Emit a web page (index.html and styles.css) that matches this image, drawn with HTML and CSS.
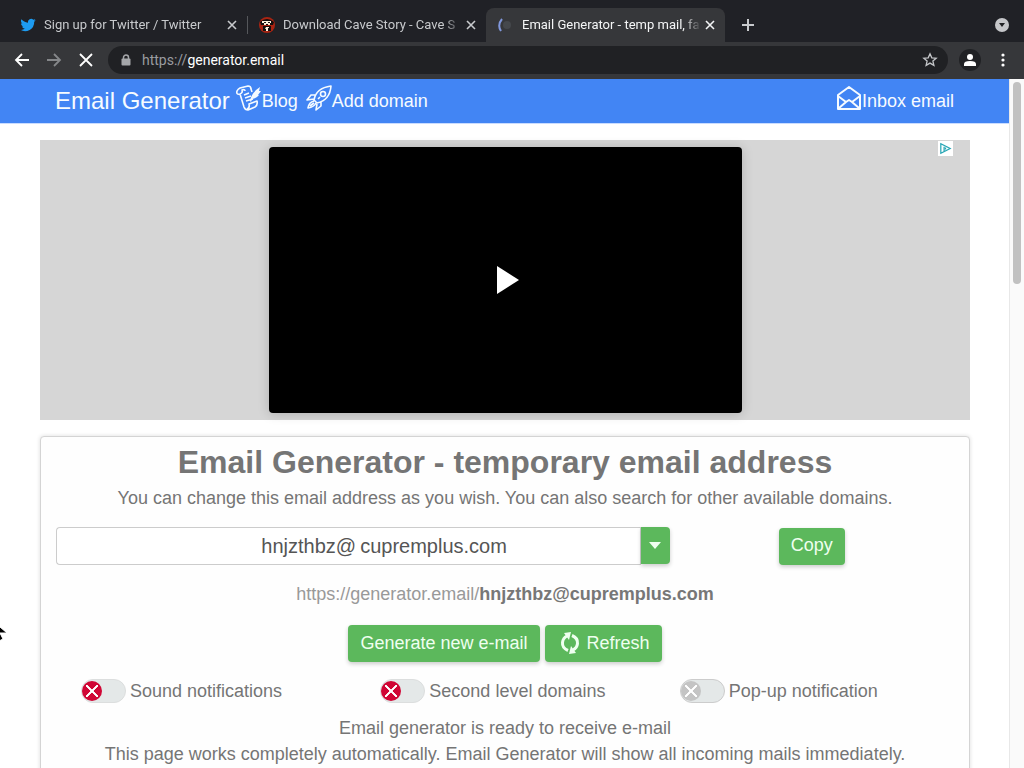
FILE: index.html
```html
<!DOCTYPE html>
<html lang="en">
<head>
<meta charset="utf-8">
<meta name="viewport" content="width=device-width, initial-scale=1">
<title>Email Generator - temp mail</title>
<link rel="stylesheet" href="styles.css">
</head>
<body>
<div class="browser">
  <div class="tab-strip">
    <div class="tab">
      <svg class="favicon" viewBox="0 0 24 24" aria-hidden="true"><path fill="#1d9bf0" d="M23.6 4.9c-.8.4-1.700.6-2.700.8 1-.6 1.700-1.500 2.100-2.600-.9.500-1.900.9-3 1.100A4.800 4.800 0 0 0 11.900 8.500C8 8.300 4.500 6.400 2.100 3.500c-1.300 2.200-.7 5 1.500 6.400-.8 0-1.500-.2-2.200-.6 0 2.300 1.600 4.300 3.800 4.700-.7.2-1.400.2-2.100.1.6 1.900 2.400 3.300 4.400 3.300A9.600 9.600 0 0 1 .5 19.300 13.600 13.600 0 0 0 21.300 7.300c.9-.7 1.700-1.500 2.300-2.400z"/></svg>
      <span class="tab-title">Sign up for Twitter / Twitter</span>
      <button class="tab-close" aria-label="Close tab"><svg viewBox="0 0 10 10"><path d="M1 1l8 8M9 1L1 9"/></svg></button>
    </div>
    <div class="tab tab-divided">
      <svg class="favicon" viewBox="0 0 16 16" aria-hidden="true"><circle cx="8" cy="8" r="8" fill="#a92412"/><path fill="#141010" d="M1 5Q8-1 15 5l-1 3H2zM4 9h8v5H4z"/><path fill="#fff3dc" d="M3 4h9v2h-1v2H9V7H7v1H5V6H3zM7 10h3v1H9v3H7v-2H6z"/><path fill="#1c1414" d="M5 5h2v1H5zm4 0h2v1H9z"/></svg>
      <span class="tab-title">Download Cave Story - Cave S</span>
      <button class="tab-close" aria-label="Close tab"><svg viewBox="0 0 10 10"><path d="M1 1l8 8M9 1L1 9"/></svg></button>
    </div>
    <div class="tab tab-active">
      <svg class="favicon" viewBox="0 0 16 16" aria-hidden="true"><circle cx="9" cy="8" r="4" fill="#45484c"/><path d="M4 2Q-1 8 3 14" fill="none" stroke="#8198dc" stroke-width="2"/></svg>
      <span class="tab-title">Email Generator - temp mail, fa</span>
      <button class="tab-close" aria-label="Close tab"><svg viewBox="0 0 10 10"><path d="M1 1l8 8M9 1L1 9"/></svg></button>
    </div>
    <button class="new-tab" aria-label="New tab"><svg viewBox="0 0 12 12"><path d="M6 0v12M0 6h12"/></svg></button>
    <button class="tab-search" aria-label="Search tabs"><svg viewBox="0 0 14 14"><circle cx="7" cy="7" r="7" fill="#c6c7ca"/><path fill="#202124" d="M4 5h6L7 9z"/></svg></button>
  </div>

  <div class="toolbar">
    <button class="tool" aria-label="Back"><svg viewBox="0 0 16 16"><path d="M15 8H2M8 2L2 8l6 6"/></svg></button>
    <button class="tool tool-dim" aria-label="Forward"><svg viewBox="0 0 16 16"><path d="M1 8h13M8 2l6 6-6 6"/></svg></button>
    <button class="tool" aria-label="Stop loading"><svg viewBox="0 0 16 16"><path d="M2 2l12 12M14 2L2 14"/></svg></button>
    <div class="address">
      <svg class="lock" viewBox="0 0 10 12" aria-hidden="true"><path fill="none" stroke="#a5a7aa" stroke-width="1.500" d="M2.500 5V3.500a2.500 2.500 0 0 1 5 0V5"/><rect y="4.500" x=".5" width="9" height="7" rx="1" fill="#a5a7aa"/></svg>
      <span class="url"><span class="scheme">https://</span>generator.email</span>
      <button class="star" aria-label="Bookmark this page"><svg viewBox="0 0 16 16"><path fill="none" stroke="#c4c6c9" stroke-width="1.300" d="M8 1.800l1.800 4 4.400.4-3.300 2.900 1 4.300L8 11.100l-3.900 2.300 1-4.300-3.300-2.900 4.400-.4z"/></svg></button>
    </div>
    <button class="profile" aria-label="Profile"><svg viewBox="0 0 12 12"><circle cx="6" cy="3" r="3"/><path d="M0 12v-2q0-3 6-3t6 3v2z"/></svg></button>
    <button class="menu" aria-label="Menu"><svg viewBox="0 0 4 14"><circle cx="2" cy="2" r="1.600"/><circle cx="2" cy="7" r="1.600"/><circle cx="2" cy="12" r="1.600"/></svg></button>
  </div>

  <div class="viewport">
    <div class="page">
      <header class="site-header">
        <nav class="nav">
          <a class="brand" href="#">Email Generator</a>
          <a class="nav-link nav-blog" href="#blog"><svg class="nav-icon" viewBox="0 0 26 26" aria-hidden="true"><path d="M4 9Q0 10 1 6 2 4 4 3l8-2q3 0 3 3l1 3M4 9q3-1 2-4 3-1 3 1M4 9l4 13q1 3 4 3l7-3q3-2 2-6l-8 3q1 4-2 5"/><path stroke-width="1.400" d="M8 10l5-2M9 13l6-2M10 16l7-2"/><path fill="currentColor" stroke="none" d="M14 16q1-8 10-14l-1 4h2l-3 4h1q-3 4-7 4l-1 3z"/></svg>Blog</a>
          <a class="nav-link" href="#domain"><svg class="nav-icon" viewBox="0 0 26 26" aria-hidden="true"><path d="M8 15Q10 3 25 1q-1 14-14 17zM9 10H5l-4 5 7-1M15 17v4l-5 4 1-6M8 16q-5 1-6 7 6-1 8-5M4 21l4-3"/><circle cx="17" cy="9" r="2.500"/><path d="M12 14l2-2"/></svg>Add domain</a>
          <a class="nav-link nav-inbox" href="#inbox"><svg class="nav-icon" viewBox="0 0 26 26" aria-hidden="true"><path stroke-width="2" d="M2 10l11-8 11 8v14H2zM2 11l8 6M24 11l-8 6M3 23l7-6 3-2 3 2 7 6"/></svg>Inbox email</a>
        </nav>
      </header>

      <main class="content">
        <section class="ad" aria-label="Advertisement">
          <button class="video" aria-label="Play video"><svg viewBox="0 0 22 28"><path fill="#fff" d="M0 0l22 14L0 28z"/></svg></button>
          <a class="ad-choices" href="#ads" aria-label="AdChoices"><svg viewBox="0 0 16 16"><path fill="none" stroke="#27a6b5" stroke-width="1.300" d="M3 3v10l10-5zM6.500 6v5M8 7v2"/></svg></a>
        </section>

        <section class="card">
          <h1 class="title">Email Generator - temporary email address</h1>
          <p class="text">You can change this email address as you wish. You can also search for other available domains.</p>
          <div class="address-row">
            <div class="email-group">
              <input class="email-user" aria-label="User name" value="hnjzthbz@">
              <input class="email-domain" aria-label="Domain" value="cupremplus.com">
              <button class="drop" aria-label="Choose domain"><svg viewBox="0 0 12 7"><path fill="#effff0" d="M0 0h12L6 7z"/></svg></button>
            </div>
            <button class="btn">Copy</button>
          </div>
          <p class="text direct"><a href="#mail">https://generator.email/<b>hnjzthbz@cupremplus.com</b></a></p>
          <div class="actions">
            <button class="btn">Generate new e-mail</button>
            <button class="btn btn-refresh"><svg viewBox="0 0 20 22" aria-hidden="true"><path fill="none" stroke="#effff0" stroke-width="3" d="M8 18.500Q2 16 2.500 10.500 3 6 7 4M12 3.500Q18 6 17.500 11.500 17 16 13 18"/><path fill="#effff0" d="M4 1l7-1-2 8zM16 21l-7 1 2-8z"/></svg>Refresh</button>
          </div>
          <div class="options">
            <label class="option"><input class="switch" type="checkbox" role="switch">Sound notifications</label>
            <label class="option"><input class="switch" type="checkbox" role="switch">Second level domains</label>
            <label class="option"><input class="switch" type="checkbox" role="switch" disabled>Pop-up notification</label>
          </div>
          <p class="text">Email generator is ready to receive e-mail</p>
          <p class="text">This page works completely automatically. Email Generator will show all incoming mails immediately.</p>
        </section>
      </main>
    </div>
    <div class="scrollbar" aria-hidden="true"><div class="thumb"></div></div>
  </div>
</div>
<svg class="cursor" viewBox="0 0 18 26" aria-hidden="true"><path fill="#000" stroke="#fff" stroke-width="1" d="M1 1v18l4-4 3 7 4-2-3-6h7z"/></svg>
</body>
</html>
```
FILE: styles.css
```css
* { box-sizing: border-box; }

body {
  margin: 0;
  overflow: hidden;
  background: #fff;
  font-family: "Liberation Sans", Arial, sans-serif;
}

button {
  padding: 0;
  border: 0;
  background: none;
  color: inherit;
  font: inherit;
}

a { color: inherit; text-decoration: none; }
svg { display: block; flex: none; }

.browser {
  display: flex;
  flex-direction: column;
  height: 100vh;
}

/* Tab strip */
.tab-strip {
  display: flex;
  flex: none;
  align-items: flex-end;
  height: 42px;
  padding: 0 15px 0 8px;
  background: #202126;
  color: #c8cacd;
  font: 13px/16px Roboto, sans-serif;
}

.tab {
  display: flex;
  flex: 0 1 239px;
  align-items: center;
  min-width: 0;
  height: 34px;
  padding: 0 10px 0 12px;
}

.tab-divided {
  background: linear-gradient(#55575b, #55575b) 0 8px / 1px 18px no-repeat;
}

.tab-active {
  border-radius: 8px 8px 0 0;
  background: #36373a;
  color: #f4f5f6;
}

.favicon { width: 16px; height: 16px; margin-right: 8px; }

.tab-title {
  flex: 1;
  overflow: hidden;
  white-space: nowrap;
  -webkit-mask-image: linear-gradient(90deg, #000 90%, transparent);
  mask-image: linear-gradient(90deg, #000 90%, transparent);
}

.tab-close { margin-left: 4px; }
.tab-close svg { width: 10px; height: 10px; }
.tab-close path,
.new-tab path { stroke: currentColor; stroke-width: 2; }
.tab-close path { stroke-width: 1.600; }
.new-tab { margin: 0 0 11px 17px; }
.new-tab svg { width: 12px; height: 12px; }
.tab-search { margin: 0 0 10px auto; }
.tab-search svg { width: 14px; height: 14px; }

/* Toolbar */
.toolbar {
  display: flex;
  flex: none;
  align-items: center;
  height: 37px;
  padding: 0 19px 2px 14px;
  background: #36373a;
  color: #fff;
}

.tool { margin-right: 16px; }
.tool svg { width: 16px; height: 16px; }
.tool path { fill: none; stroke: currentColor; stroke-width: 1.800; }
.tool-dim { color: #85878a; }

.address {
  display: flex;
  flex: 1;
  align-items: center;
  height: 28px;
  margin-left: -2px;
  padding: 0 10px 0 13px;
  border-radius: 14px;
  background: #202124;
}

.lock { width: 10px; height: 12px; margin-right: 11px; }
.url { flex: 1; font: 14px/20px Roboto, sans-serif; }
.scheme { color: #9a9ca0; }
.star svg { width: 16px; height: 16px; }

.profile {
  display: grid;
  place-items: center;
  width: 22px;
  height: 22px;
  margin: 0 20px 0 11px;
  border-radius: 50%;
  background: #202124;
}

.profile svg { width: 12px; height: 12px; fill: #fff; }
.menu svg { width: 4px; height: 14px; fill: #fff; }

/* Viewport */
.viewport {
  display: flex;
  flex: 1;
  min-height: 0;
}

.page { flex: 1; min-width: 0; overflow: hidden; }

.scrollbar {
  flex: none;
  width: 15px;
  padding: 3px 2px 0 3px;
  border-left: 1px solid #e8e8e8;
  background: #fafafa;
}

.thumb { width: 8px; height: 202px; border-radius: 4px; background: #c1c1c1; }

.site-header {
  border-bottom: 1px solid #c9dcff;
  background: #4285f4;
  color: #f6fbff;
}

.nav {
  display: flex;
  align-items: center;
  height: 44px;
  padding: 0 55px;
  font-size: 18px;
}

.brand { margin-right: 6px; font-size: 24px; }
.nav-link { display: flex; align-items: center; margin-right: 8px; }

.nav-icon {
  width: 26px;
  height: 26px;
  margin-bottom: 6px;
  fill: none;
  stroke: currentColor;
  stroke-width: 1.600;
  stroke-linejoin: round;
}

.nav-inbox { margin: 0 0 0 auto; }

.content { padding: 16px 39px 0 40px; }

/* Advertisement */
.ad {
  position: relative;
  display: grid;
  place-items: center;
  height: 280px;
  background: #d6d6d6;
}

.video {
  display: grid;
  place-items: center;
  width: 473px;
  max-width: 100%;
  height: 266px;
  padding-left: 5px;
  border-radius: 4px;
  background: #000;
  box-shadow: 0 1px 12px rgba(0, 0, 0, .18);
}

.video svg { width: 22px; height: 28px; }

.ad-choices {
  position: absolute;
  top: 1px;
  right: 17px;
  background: #fff;
}

.ad-choices svg { width: 15px; height: 15px; }

/* Generator card */
.card {
  margin-top: 16px;
  padding: 5px 15px 24px;
  border: 1px solid #d4d4d4;
  border-radius: 4px;
  background: #fefefe;
  box-shadow: 0 0 4px rgba(0, 0, 0, .14);
  color: #757575;
  font-size: 18px;
  line-height: 26px;
  text-align: center;
}

.title { margin: 0 0 3px; font-size: 32px; line-height: 40px; }
.text { margin: 0; }

.address-row {
  display: grid;
  grid-template-columns: 41fr 19fr;
  align-items: center;
  justify-items: center;
  margin: 16px 0;
}

.email-group { display: flex; width: 100%; height: 38px; }

.email-group input {
  min-width: 0;
  padding: 0 2px;
  border: 1px solid #ccc;
  background: #fff;
  color: #555;
  font: 20px "Liberation Sans", Arial, sans-serif;
}

.email-group .email-user {
  flex: 302;
  border-right: 0;
  border-radius: 4px 0 0 4px;
  text-align: right;
}

.email-group .email-domain { flex: 282; border-left: 0; }

.drop {
  display: grid;
  place-items: center;
  width: 29px;
  height: 37px;
  border-radius: 0 4px 4px 0;
  background: #5cb85c;
  box-shadow: 0 2px 4px rgba(0, 0, 0, .2);
}

.drop svg { width: 12px; height: 7px; }

.btn {
  display: flex;
  align-items: center;
  height: 37px;
  padding: 0 12px 2px;
  border-radius: 4px;
  background: #5cb85c;
  box-shadow: 0 2px 4px rgba(0, 0, 0, .2);
  color: #effff0;
  font-size: 18px;
}

.btn-refresh svg { width: 20px; height: 22px; margin: 0 7px 0 3px; }
.direct { color: #999; }
.direct b { color: #777; }

.actions {
  display: flex;
  justify-content: center;
  gap: 5px;
  margin: 18px 0 17px;
}

.options {
  display: grid;
  grid-template-columns: repeat(3, 1fr);
  margin-bottom: 12px;
}

.option {
  display: flex;
  align-items: center;
  height: 24px;
  padding-left: 25px;
}

.switch {
  appearance: none;
  display: flex;
  align-items: center;
  flex: none;
  width: 45px;
  height: 24px;
  margin: 0 4px 0 0;
  border: 1px solid #dcdede;
  border-radius: 12px;
  background: #e4e8e8;
}

.switch::before {
  content: "";
  width: 20px;
  height: 20px;
  border-radius: 50%;
  background:
    linear-gradient(45deg, transparent 44%, #fff 46% 54%, transparent 56%) center / 12px 12px no-repeat,
    linear-gradient(-45deg, transparent 44%, #fff 46% 54%, transparent 56%) center / 12px 12px no-repeat,
    #d00635;
}

.switch:disabled { border-color: #ccc; }
.switch:disabled::before { background-color: #c4c4c4; }

/* Mouse pointer over the window edge */
.cursor {
  position: absolute;
  top: 619px;
  left: -9px;
  width: 18px;
  height: 26px;
}
```
